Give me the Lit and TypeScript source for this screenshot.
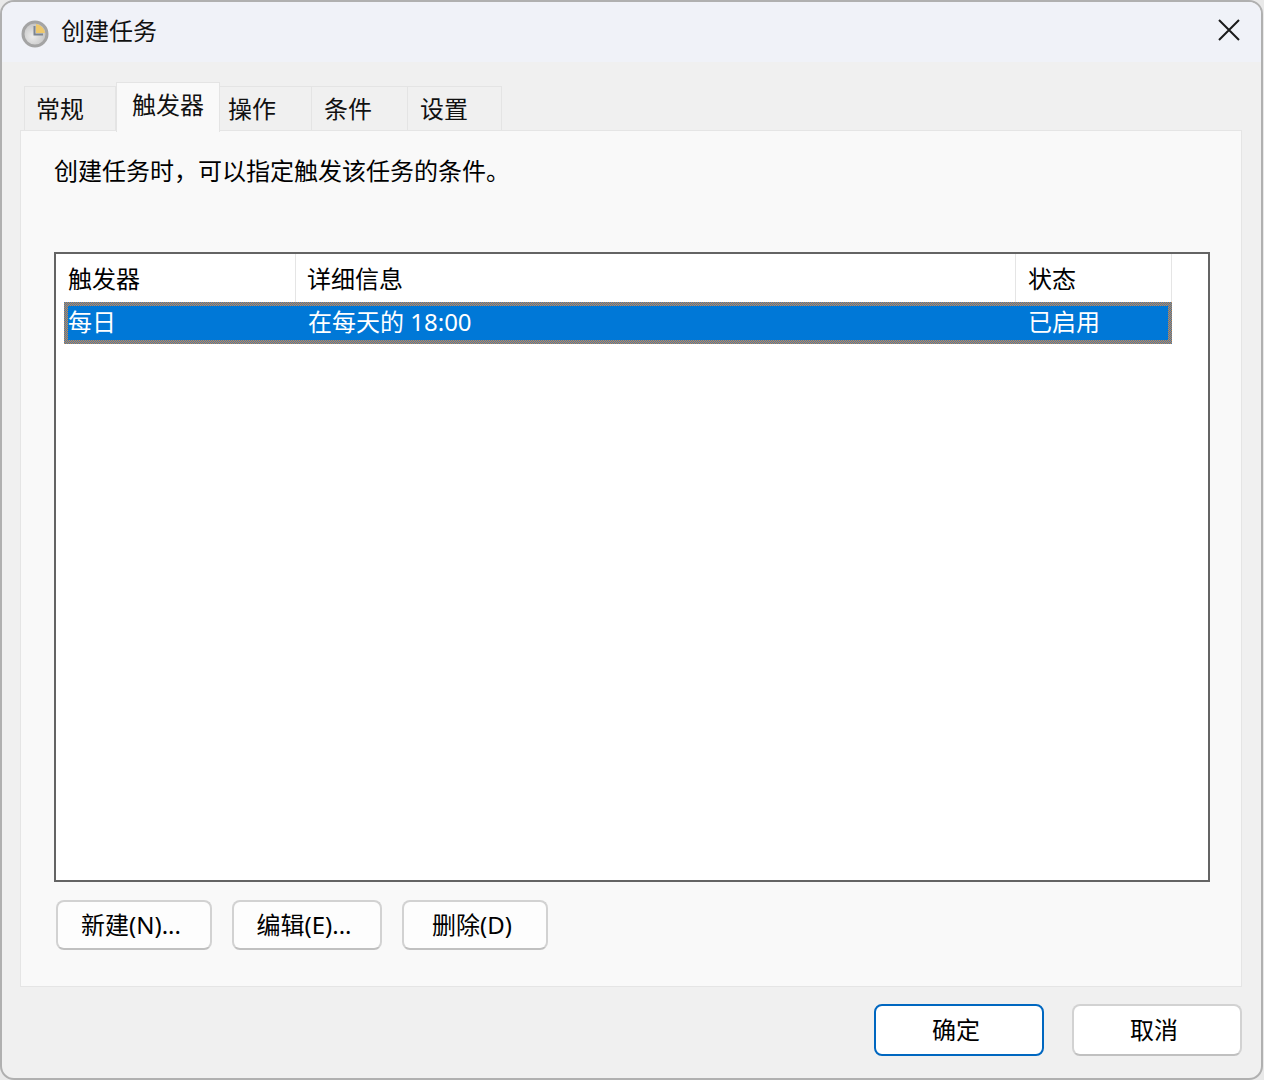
import { LitElement, html, css } from "lit";
import { customElement } from "lit/decorators.js";

const TABS = [
  { label: "常规", cls: "t1" },
  { label: "触发器", cls: "t2 active" },
  { label: "操作", cls: "t3" },
  { label: "条件", cls: "t4" },
  { label: "设置", cls: "t5" },
];

@customElement("app-root")
export class AppRoot extends LitElement {
  static styles = css`
    :host {
      display: block;
      width: 1264px;
      height: 1080px;
      background: #e9e9e9;
      font-family: "Noto Sans", "Noto Sans CJK SC", sans-serif;
      font-size: 24px;
      color: #111;
      overflow: hidden;
    }
    .window {
      box-sizing: border-box;
      width: 1263px;
      height: 1080px;
      border: 2px solid #b0b0b0;
      border-radius: 14px;
      background: #f0f0f0;
      display: flex;
      flex-direction: column;
      overflow: hidden;
    }
    .titlebar {
      height: 60px;
      flex: none;
      background: #f0f2f8;
      display: flex;
      align-items: center;
      padding: 0 21px 0 18px;
      box-sizing: border-box;
    }
    .app-icon { width: 30px; height: 30px; margin: 4px 11px 0 0; flex: none; }
    .title { flex: 1; line-height: 32px; margin-top: -2px; }
    .close { width: 22px; height: 22px; flex: none; margin-top: -4px; }
    .tabs {
      flex: none;
      height: 48px;
      margin-top: 20px;
      padding-left: 22px;
      display: flex;
      align-items: flex-end;
      position: relative;
      z-index: 1;
    }
    .tab {
      box-sizing: border-box;
      height: 44px;
      border: 1px solid #e4e4e4;
      border-bottom: none;
      border-left-width: 0;
      padding-left: 12px;
      line-height: 44px;
      background: #f0f0f0;
    }
    .tab.t1 { width: 92px; border-left-width: 1px; padding-left: 11px; }
    .tab.t2 { width: 104px; }
    .tab.t3 { width: 92px; padding-left: 8px; }
    .tab.t4 { width: 96px; }
    .tab.t5 { width: 94px; }
    .tab.active {
      height: 50px;
      margin-bottom: -2px;
      background: #f9f9f9;
      padding-left: 15px;
      line-height: 44px;
      border-left-width: 1px;
    }
    .panel {
      flex: none;
      box-sizing: border-box;
      height: 857px;
      margin: 0 19px 0 18px;
      background: #f9f9f9;
      border: 1px solid #e5e5e5;
      padding: 24px 0 0 33px;
      color: #000;
    }
    .desc { line-height: 32px; height: 32px; margin-bottom: 65px; }
    .list {
      box-sizing: border-box;
      width: 1156px;
      height: 630px;
      border: 2px solid #646464;
      background: #fff;
    }
    .head { display: flex; height: 48px; }
    .hcell {
      box-sizing: border-box;
      border-right: 1px solid #e5e5e5;
      padding-left: 12px;
      line-height: 50px;
    }
    .c1 { width: 240px; }
    .c2 { width: 720px; padding-left: 11px; }
    .c3 { width: 156px; }
    .row {
      box-sizing: border-box;
      margin-left: 8px;
      width: 1108px;
      height: 42px;
      padding: 4px;
      background: repeating-conic-gradient(#d98a3c 0 25%, #2d78c4 0 50%) 0 0 / 2px 2px;
    }
    .row-in {
      height: 34px;
      background: #0078d7;
      color: #fff;
      display: grid;
      grid-template-columns: 240px 720px 1fr;
      line-height: 32px;
    }
    .actions { display: flex; gap: 20px; margin: 18px 0 0 2px; }
    .btn {
      box-sizing: border-box;
      border: 2px solid #d2d2d2;
      border-bottom-color: #c0c0c0;
      border-radius: 8px;
      background: #fdfdfd;
      display: flex;
      align-items: center;
      justify-content: center;
      padding-right: 6px;
      color: #000;
      line-height: 1;
    }
    .b1 { width: 156px; height: 50px; }
    .b2 { width: 150px; height: 50px; }
    .b3 { width: 146px; height: 50px; }
    .footer {
      flex: 1;
      display: flex;
      justify-content: flex-end;
      gap: 28px;
      padding: 17px 19px 0 0;
    }
    .fb { width: 170px; height: 52px; background: #fff; }
    .primary { border-color: #0067c0; }
  `;

  render() {
    return html`
      <div class="window">
        <div class="titlebar">
          <svg class="app-icon" viewBox="0 0 30 30">
            <defs>
              <radialGradient id="face" cx="40%" cy="60%" r="65%">
                <stop offset="0" stop-color="#ececec" />
                <stop offset="1" stop-color="#bdbdbd" />
              </radialGradient>
            </defs>
            <circle cx="15" cy="15" r="12" fill="url(#face)" stroke="#a4a4a4" stroke-width="3" />
            <path d="M16 5 A10 10 0 0 1 25 14 H16 Z" fill="#eec86c" />
            <path d="M14.5 7 V15.5 H23" fill="none" stroke="#7d8590" stroke-width="2" />
          </svg>
          <div class="title">创建任务</div>
          <svg class="close" viewBox="0 0 22 22">
            <path d="M1 1 L21 21 M21 1 L1 21" stroke="#1a1a1a" stroke-width="2" fill="none" />
          </svg>
        </div>
        <div class="tabs">
          ${TABS.map((t) => html`<div class="tab ${t.cls}">${t.label}</div>`)}
        </div>
        <div class="panel">
          <div class="desc">创建任务时，可以指定触发该任务的条件。</div>
          <div class="list">
            <div class="head">
              <div class="hcell c1">触发器</div>
              <div class="hcell c2">详细信息</div>
              <div class="hcell c3">状态</div>
            </div>
            <div class="row">
              <div class="row-in">
                <div>每日</div>
                <div>在每天的 18:00</div>
                <div>已启用</div>
              </div>
            </div>
          </div>
          <div class="actions">
            <div class="btn b1">新建(N)...</div>
            <div class="btn b2">编辑(E)...</div>
            <div class="btn b3">删除(D)</div>
          </div>
        </div>
        <div class="footer">
          <div class="btn fb primary">确定</div>
          <div class="btn fb">取消</div>
        </div>
      </div>
    `;
  }
}
